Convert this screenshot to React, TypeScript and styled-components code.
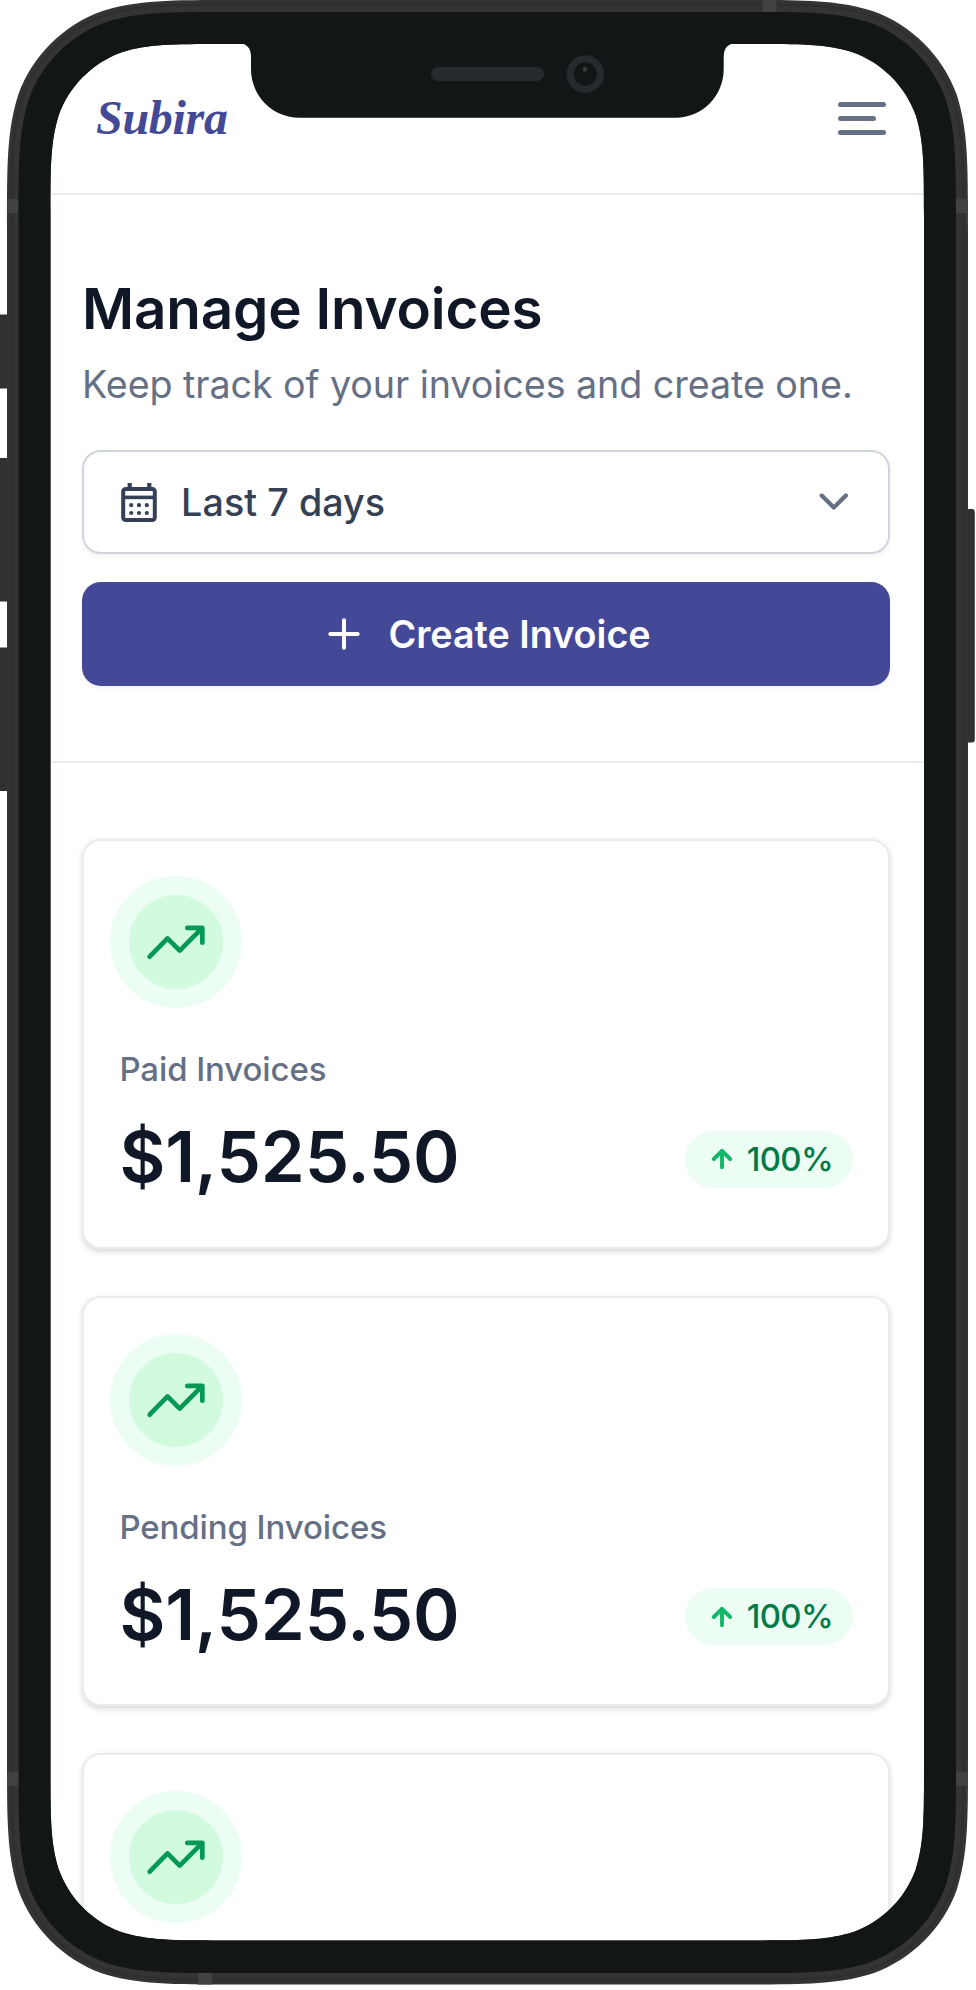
import React from "react";
import styled, { createGlobalStyle } from "styled-components";

const GlobalStyle = createGlobalStyle`
  * { box-sizing: border-box; }
  html, body { margin: 0; background: #fff; }
  body { width: 976px; height: 1990px; overflow: hidden; }
`;

const Device = styled.main`
  position: relative;
  width: 976px;
  height: 1990px;
  overflow: hidden;
  padding: 44px 52px 49px 50px;
  font-family: Inter, "Liberation Sans", sans-serif;
`;

const Screen = styled.div`
  height: 1897px;
  overflow: hidden;
  background: #fff;
`;

const Frame = styled.svg`
  position: absolute;
  inset: 0;
  pointer-events: none;
`;

const Header = styled.header`
  height: 150.6px;
  padding: 4px 38.2px 4px 46px;
  display: flex;
  align-items: center;
  justify-content: space-between;
  border-bottom: 2.4px solid #eaecf0;
`;

const Logo = styled.div`
  font: italic 700 48px/56px "Liberation Serif", serif;
  color: #444997;
  letter-spacing: -0.3px;
`;

const MenuButton = styled.button`
  padding: 0;
  border: 0;
  background: none;
  display: flex;
  flex-direction: column;
  gap: 9.4px;
`;

const MenuLine = styled.span<{ $width: number }>`
  width: ${(p) => p.$width}px;
  height: 4.7px;
  border-radius: 3px;
  background: #667085;
`;

const Intro = styled.section`
  padding: 76.4px 34px 75.4px 32px;
  display: flex;
  flex-direction: column;
  border-bottom: 2.4px solid #eaecf0;
`;

const Title = styled.h1`
  margin: 0;
  font-size: 56.56px;
  line-height: 75.4px;
  font-weight: 600;
  letter-spacing: -0.17px;
  color: #101828;
  white-space: nowrap;
`;

const Subtitle = styled.p`
  margin: 10px 0 36.6px;
  font-size: 37.7px;
  line-height: 56.6px;
  letter-spacing: -0.08px;
  color: #667085;
  white-space: nowrap;
`;

const Select = styled.button`
  height: 104px;
  padding: 0 35px 0 35.5px;
  display: flex;
  align-items: center;
  border: 2.36px solid #d0d5dd;
  border-radius: 18.8px;
  background: #fff;
  box-shadow: 0 2.4px 4.7px rgba(16, 24, 40, 0.05);
  font: 500 37.7px/56px Inter, sans-serif;
  color: #344054;
`;

const SelectText = styled.span`
  flex: 1;
  margin-left: 23.6px;
  text-align: left;
  letter-spacing: 0.05px;
`;

const CreateButton = styled.button`
  height: 104px;
  margin-top: 28.3px;
  padding: 0 0 0 5px;
  display: flex;
  align-items: center;
  justify-content: center;
  gap: 26px;
  border: 0;
  border-radius: 18.8px;
  background: #444997;
  box-shadow: 0 2.4px 4.7px rgba(16, 24, 40, 0.05);
  font: 600 37.7px/56px Inter, sans-serif;
  color: #fff;
`;

const Cards = styled.section`
  padding: 75.5px 34px 0 32px;
  display: flex;
  flex-direction: column;
  gap: 47.1px;
`;

const Card = styled.article`
  height: 410.2px;
  flex: none;
  padding: 35.6px 35.4px 0;
  border: 2.36px solid #eaecf0;
  border-radius: 18.8px;
  background: #fff;
  box-shadow: 0 2.4px 7px rgba(16, 24, 40, 0.1), 0 2.4px 4.7px rgba(16, 24, 40, 0.06);
`;

const TrendBadge = styled.div`
  width: 132px;
  height: 132px;
  margin-left: -9.7px;
  display: grid;
  place-items: center;
  border: 19px solid #ecfdf3;
  border-radius: 50%;
  background: #d1fadf;
`;

const CardLabel = styled.div`
  margin-top: 38px;
  font-size: 33px;
  line-height: 47.1px;
  font-weight: 500;
  letter-spacing: -0.1px;
  color: #667085;
`;

const AmountRow = styled.div`
  margin-top: 18.9px;
  display: flex;
  align-items: center;
  justify-content: space-between;
`;

const Amount = styled.strong`
  font-size: 70.7px;
  line-height: 89.6px;
  font-weight: 600;
  letter-spacing: -0.2px;
  color: #101828;
`;

const Change = styled.span`
  height: 56.5px;
  margin-top: 4.5px;
  padding: 0 19.5px 0 24.5px;
  display: flex;
  align-items: center;
  gap: 11.3px;
  border-radius: 29px;
  background: #ecfdf3;
  font-size: 33px;
  line-height: 47px;
  font-weight: 500;
  letter-spacing: -0.65px;
  color: #027a48;
`;

const CalendarIcon = () => (
  <svg width="38" height="42" viewBox="0 0 38 42" fill="none" stroke="#344054">
    <rect x="3.2" y="8" width="31.6" height="31" rx="2.5" strokeWidth="4" />
    <path d="M9.7 2v6M29.3 2v6" strokeWidth="4.2" />
    <path d="M3 16.4h32" strokeWidth="3.6" />
    <path
      d="M11.2 24.2h.01M19 24.2h.01M26.8 24.2h.01M11.2 32h.01M19 32h.01M26.8 32h.01"
      strokeWidth="4.2"
      strokeLinecap="round"
    />
  </svg>
);

const ChevronIcon = () => (
  <svg width="38" height="38" viewBox="0 0 38 38" fill="none" stroke="#667085" strokeWidth="4.2" strokeLinecap="round" strokeLinejoin="round">
    <path d="M6.7 12.5 18.8 24.6 30.9 12.5" />
  </svg>
);

const PlusIcon = () => (
  <svg width="36" height="36" viewBox="0 0 36 36" fill="none" stroke="#fff" strokeWidth="4" strokeLinecap="round">
    <path d="M18 4.3v27.4M4.3 18h27.4" />
  </svg>
);

const TrendIcon = () => (
  <svg width="94" height="94" viewBox="19 19 94 94" fill="none" stroke="#039855" strokeWidth="4.7" strokeLinecap="round" strokeLinejoin="round">
    <path d="M39.7 80.7 57.5 62.4 69.7 74.6 92.3 51.9M77.3 51.9H92.3V66.7" />
  </svg>
);

const ArrowUpIcon = () => (
  <svg width="26" height="26" viewBox="0 0 26 26" fill="none" stroke="#12b76a" strokeWidth="3.9" strokeLinecap="round" strokeLinejoin="round">
    <path d="M13 21.2V4.8M4.8 13 13 4.8 21.2 13" />
  </svg>
);

/* Corner control points, as fractions of the radius: three joined Bézier curves. */
const CORNER = [
  [1.528665, 0], [1.08849296, 0], [0.86840694, 0], [0.63149379, 0.07491139],
  [0.37282383, 0.16905956], [0.16905956, 0.37282383], [0.07491139, 0.63149379],
  [0, 0.86840694], [0, 1.08849296], [0, 1.528665],
];

/* Rounded rectangle whose corners ease into the straight sides. */
const smoothRect = (x0: number, y0: number, x1: number, y1: number, r: number) => {
  const corner = (points: number[][], sx: number, sy: number, cx: number, cy: number) => {
    const p = points.map(([a, b]) => `${(cx + sx * a * r).toFixed(2)} ${(cy + sy * b * r).toFixed(2)}`);
    return `${p[0]}C${p[1]} ${p[2]} ${p[3]}C${p[4]} ${p[5]} ${p[6]}C${p[7]} ${p[8]} ${p[9]}`;
  };
  const reversed = [...CORNER].reverse();
  return [
    `M${corner(reversed, 1, 1, x0, y0)}`,
    `L${corner(CORNER, -1, 1, x1, y0)}`,
    `L${corner(reversed, -1, -1, x1, y1)}`,
    `L${corner(CORNER, 1, -1, x0, y1)}`,
    "Z",
  ].join("");
};

const outer = smoothRect(7, 0, 968, 1984.5, 150);
const ridge = smoothRect(10.5, 3.5, 964.5, 1981, 147);
const ridgeInner = smoothRect(13, 6, 962, 1978.5, 144);
const bezel = smoothRect(18.5, 12, 956, 1973, 138);
const display = smoothRect(50.5, 44, 924, 1940.5, 112);

const DeviceFrame = () => (
  <Frame width="976" height="1990" viewBox="0 0 976 1990">
    <g fill="#313131">
      <rect x="-3" y="314.5" width="15" height="74" rx="3" />
      <rect x="-3" y="458" width="15" height="143.5" rx="3" />
      <rect x="-3" y="647.5" width="15" height="143.5" rx="3" />
      <rect x="962" y="509" width="12.8" height="233.5" rx="3" />
    </g>
    <path d={outer + display} fill="#343434" fillRule="evenodd" />
    <path d={ridge + ridgeInner} fill="#2f2f2f" fillRule="evenodd" />
    <g fill="#424242">
      <rect x="7" y="199" width="12" height="14" />
      <rect x="956" y="199" width="12" height="14" />
      <rect x="7" y="1771.7" width="12" height="14" />
      <rect x="956" y="1771.7" width="12" height="14" />
      <rect x="762.7" y="0" width="13.6" height="12" />
      <rect x="198" y="1973" width="14" height="11.5" />
    </g>
    <path d={bezel + display} fill="#121616" fillRule="evenodd" />
    <path d="M239 43.5Q251 43.5 251 57V69A48 48.7 0 0 0 299 117.7H675.7A48 48.7 0 0 0 723.7 69V57Q723.7 43.5 735.7 43.5Z" fill="#121616" />
    <rect x="431" y="67" width="113" height="14" rx="7" fill="#262a2d" />
    <circle cx="585.3" cy="74" r="15.2" fill="none" stroke="#262a2d" strokeWidth="7" />
    <circle cx="585" cy="69.4" r="2.3" fill="#363d40" />
  </Frame>
);

const stats = [
  { label: "Paid Invoices", amount: "$1,525.50", change: "100%" },
  { label: "Pending Invoices", amount: "$1,525.50", change: "100%" },
];

export default function App() {
  return (
    <>
      <GlobalStyle />
      <Device>
        <Screen>
          <Header>
            <Logo>Subira</Logo>
            <MenuButton aria-label="Menu">
              <MenuLine $width={47.5} />
              <MenuLine $width={38} />
              <MenuLine $width={47.5} />
            </MenuButton>
          </Header>
          <Intro>
            <Title>Manage Invoices</Title>
            <Subtitle>Keep track of your invoices and create one.</Subtitle>
            <Select>
              <CalendarIcon />
              <SelectText>Last 7 days</SelectText>
              <ChevronIcon />
            </Select>
            <CreateButton>
              <PlusIcon />
              Create Invoice
            </CreateButton>
          </Intro>
          <Cards>
            {stats.map((s) => (
              <Card key={s.label}>
                <TrendBadge>
                  <TrendIcon />
                </TrendBadge>
                <CardLabel>{s.label}</CardLabel>
                <AmountRow>
                  <Amount>{s.amount}</Amount>
                  <Change>
                    <ArrowUpIcon />
                    {s.change}
                  </Change>
                </AmountRow>
              </Card>
            ))}
            <Card>
              <TrendBadge>
                <TrendIcon />
              </TrendBadge>
            </Card>
          </Cards>
        </Screen>
        <DeviceFrame />
      </Device>
    </>
  );
}
